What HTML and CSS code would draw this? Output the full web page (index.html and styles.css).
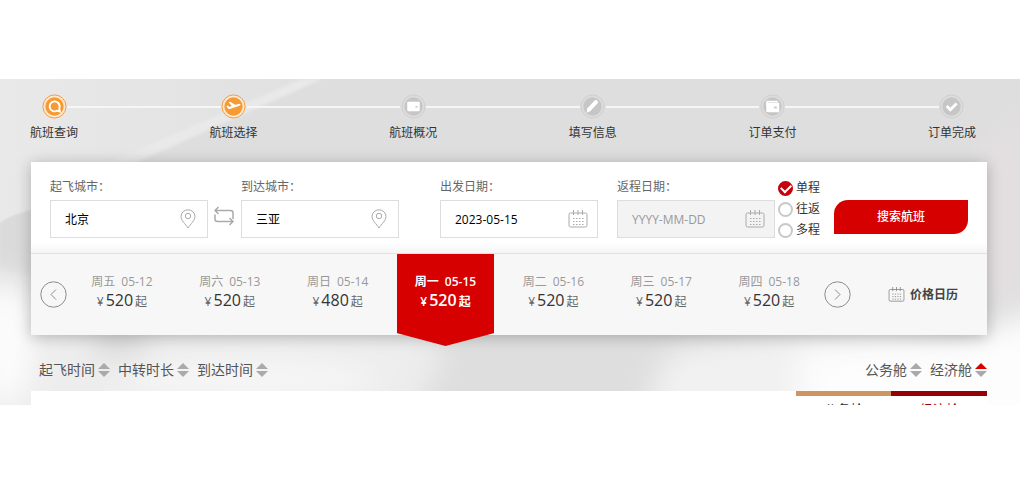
FILE: index.html
```html
<!DOCTYPE html>
<html lang="zh-CN">

<head>
    <meta charset="UTF-8">
    <title>航班选择</title>
    <link rel="stylesheet" href="styles.css">
</head>

<body>
    <!-- shared icons -->
    <svg class="symbols" aria-hidden="true">
        <symbol id="pin" viewBox="0 0 16 20">
            <path d="M8 19C5.500 15 1 11.500 1 7.500a7 6.700 0 0 1 14 0C15 11.500 10.500 15 8 19z" />
            <circle cx="8" cy="7" r="2.700" />
        </symbol>
        <symbol id="calendar" viewBox="0 0 20 18">
            <rect x="1" y="3" width="18" height="14" rx="1.500" />
            <path d="M5.500 0v5M10 0v5M14.500 0v5" />
            <path d="M5 8.500h11M5 11.500h11M5 14.500h11" stroke-dasharray="1.500 1.500" />
        </symbol>
    </svg>

    <main class="page">
        <svg class="sky" viewBox="0 0 1020 326" preserveAspectRatio="none" aria-hidden="true">
            <defs>
                <filter id="soft" x="-20%" y="-50%" width="140%" height="200%">
                    <feGaussianBlur stdDeviation="14" />
                </filter>
                <filter id="edge">
                    <feGaussianBlur stdDeviation="1.500" />
                </filter>
                <linearGradient id="light">
                    <stop offset="0" stop-color="#e9e9e9" />
                    <stop offset="1" stop-color="#e0e0e0" />
                </linearGradient>
            </defs>
            <path d="M0 0h320L125 84L31 131Q10 136 0 144z" fill="url(#light)" />
            <path d="M302 0h20L135 84h-28z" fill="#e9e9e9" filter="url(#edge)" />
            <path d="M0 144Q14 136 31 132v65L0 190z" fill="#dadada" filter="url(#edge)" />
            <g filter="url(#soft)">
                <path d="M-30 195Q10 185 60 230L390 240Q470 270 430 300L400 370H-30z" fill="#ededed" />
                <ellipse cx="5" cy="265" rx="28" ry="60" fill="#fcfcfc" />
                <ellipse cx="250" cy="300" rx="130" ry="20" fill="#f6f6f6" />
                <ellipse cx="120" cy="262" rx="30" ry="14" fill="#d6d6d6" />
                <path d="M1030 20v200H970V80z" fill="#e3dfe0" />
                <path d="M650 370Q640 270 700 265L870 240L960 258L1050 222V370z" fill="#f1f1f1" />
                <path d="M800 370V272L960 262L1060 235V370z" fill="#fdfdfd" />
            </g>
        </svg>

        <ol class="steps">
            <li class="step done">
                <svg class="step-icon" viewBox="0 0 26 26">
                    <circle class="ring" cx="13" cy="13" r="12" />
                    <circle class="disc" cx="13" cy="13" r="9.500" />
                    <path class="line" d="M16 17.200a5.200 5.200 0 1 1 2-2.500l.5 3.500-2.500-1" />
                </svg>
                航班查询
            </li>
            <li class="step-line" aria-hidden="true"></li>
            <li class="step done">
                <svg class="step-icon" viewBox="0 0 26 26">
                    <circle class="ring" cx="13" cy="13" r="12" />
                    <circle class="disc" cx="13" cy="13" r="9.500" />
                    <path class="shape" d="M5.500 12.500l1.200-.5 2 1.200 2.500-.7-3.200-4 1.600-.4 5 3.200 3.800-1q1.800-.2 1.900.6t-1.700 1.500L9 15.600q-1.300.2-1.900-.7z" />
                </svg>
                航班选择
            </li>
            <li class="step-line" aria-hidden="true"></li>
            <li class="step">
                <svg class="step-icon" viewBox="0 0 26 26">
                    <circle class="ring" cx="13" cy="13" r="12" />
                    <circle class="disc" cx="13" cy="13" r="9.500" />
                    <rect class="shape" x="6.500" y="8" width="13" height="10" rx="1" />
                    <path class="mark" d="M15 12.500h2.500v1.500H15z" />
                </svg>
                航班概况
            </li>
            <li class="step-line" aria-hidden="true"></li>
            <li class="step">
                <svg class="step-icon" viewBox="0 0 26 26">
                    <circle class="ring" cx="13" cy="13" r="12" />
                    <circle class="disc" cx="13" cy="13" r="9.500" />
                    <path class="shape" d="M7 19.500l.5-4.500 8-8.500q1.200-.8 2.500.4t.6 2.500l-8 8.600z" />
                </svg>
                填写信息
            </li>
            <li class="step-line" aria-hidden="true"></li>
            <li class="step">
                <svg class="step-icon" viewBox="0 0 26 26">
                    <circle class="ring" cx="13" cy="13" r="12" />
                    <circle class="disc" cx="13" cy="13" r="9.500" />
                    <rect class="shape" x="6.500" y="7" width="12" height="5" rx="1" />
                    <rect class="shape" x="6.500" y="9" width="13.500" height="10" rx="1" />
                    <path class="mark" d="M8 8.500h10v.6H8zM14.500 13h3v2h-3z" />
                </svg>
                订单支付
            </li>
            <li class="step-line" aria-hidden="true"></li>
            <li class="step">
                <svg class="step-icon" viewBox="0 0 26 26">
                    <circle class="ring" cx="13" cy="13" r="12" />
                    <circle class="disc" cx="13" cy="13" r="9.500" />
                    <path class="tick" d="M8 12.500l3.800 3.800 6.500-6.500" />
                </svg>
                订单完成
            </li>
        </ol>

        <section class="panel">
            <form class="search">
                <div class="field">
                    <label for="from">起飞城市：</label>
                    <div class="box">
                        <input id="from" type="text" value="北京">
                        <svg class="icon pin"><use href="#pin" /></svg>
                    </div>
                </div>
                <button class="swap" type="button" aria-label="交换城市">
                    <svg viewBox="0 0 20 20">
                        <path d="M4.500 1L1 4.500L4.500 8M1 4.500h15.500q2.500 0 2.500 2.500v6M15.500 12L19 15.500L15.500 19M19 15.500H3.500Q1 15.500 1 13V8.500" />
                    </svg>
                </button>
                <div class="field">
                    <label for="to">到达城市：</label>
                    <div class="box">
                        <input id="to" type="text" value="三亚">
                        <svg class="icon pin"><use href="#pin" /></svg>
                    </div>
                </div>
                <div class="field depart">
                    <label for="depart">出发日期：</label>
                    <div class="box">
                        <input id="depart" type="text" value="2023-05-15">
                        <svg class="icon calendar"><use href="#calendar" /></svg>
                    </div>
                </div>
                <div class="field return">
                    <label for="return">返程日期：</label>
                    <div class="box disabled">
                        <input id="return" type="text" placeholder="YYYY-MM-DD" disabled>
                        <svg class="icon calendar"><use href="#calendar" /></svg>
                    </div>
                </div>
                <div class="trip">
                    <label><input type="radio" name="trip" checked>单程</label>
                    <label><input type="radio" name="trip">往返</label>
                    <label><input type="radio" name="trip">多程</label>
                </div>
                <button class="submit" type="submit">搜索航班</button>
            </form>

            <div class="dates">
                <button class="arrow" type="button" aria-label="前一周">
                    <svg viewBox="0 0 27 27"><circle cx="13.500" cy="13.500" r="12.700" /><path d="M16 8.500l-5 5 5 5" /></svg>
                </button>
                <div class="days">
                    <button class="day" type="button"><span class="date"><span>周五</span><span>05-12</span></span><span class="price">¥<b>520</b>起</span></button>
                    <button class="day" type="button"><span class="date"><span>周六</span><span>05-13</span></span><span class="price">¥<b>520</b>起</span></button>
                    <button class="day" type="button"><span class="date"><span>周日</span><span>05-14</span></span><span class="price">¥<b>480</b>起</span></button>
                    <button class="day active" type="button"><span class="date"><span>周一</span><span>05-15</span></span><span class="price">¥<b>520</b>起</span></button>
                    <button class="day" type="button"><span class="date"><span>周二</span><span>05-16</span></span><span class="price">¥<b>520</b>起</span></button>
                    <button class="day" type="button"><span class="date"><span>周三</span><span>05-17</span></span><span class="price">¥<b>520</b>起</span></button>
                    <button class="day" type="button"><span class="date"><span>周四</span><span>05-18</span></span><span class="price">¥<b>520</b>起</span></button>
                </div>
                <button class="arrow" type="button" aria-label="后一周">
                    <svg viewBox="0 0 27 27"><circle cx="13.500" cy="13.500" r="12.700" /><path d="M11 8.500l5 5-5 5" /></svg>
                </button>
                <a class="price-calendar" href="#">
                    <svg class="icon" viewBox="0 0 20 18"><use href="#calendar" /></svg>
                    价格日历
                </a>
            </div>
        </section>

        <div class="sort">
            <button type="button">起飞时间<svg viewBox="0 0 12 14"><path d="M6 0l6 6H0z" /><path d="M0 8h12l-6 6z" /></svg></button>
            <button type="button">中转时长<svg viewBox="0 0 12 14"><path d="M6 0l6 6H0z" /><path d="M0 8h12l-6 6z" /></svg></button>
            <button type="button">到达时间<svg viewBox="0 0 12 14"><path d="M6 0l6 6H0z" /><path d="M0 8h12l-6 6z" /></svg></button>
            <button class="cabin" type="button">公务舱<svg viewBox="0 0 12 14"><path d="M6 0l6 6H0z" /><path d="M0 8h12l-6 6z" /></svg></button>
            <button type="button">经济舱<svg viewBox="0 0 12 14"><path class="on" d="M6 0l6 6H0z" /><path d="M0 8h12l-6 6z" /></svg></button>
        </div>

        <section class="results">
            <div class="tab business">公务舱</div>
            <div class="tab economy">经济舱</div>
        </section>
    </main>
</body>

</html>
```
FILE: styles.css
```css
* {
    box-sizing: border-box;
}

body {
    margin: 0;
    padding-top: 79px;
    background: #fff;
    color: #333;
    font: 12px/16px "Open Sans", "Noto Sans CJK SC", sans-serif;
}

button,
input {
    margin: 0;
    padding: 0;
    border: 0;
    background: none;
    color: inherit;
    font: inherit;
}

button {
    cursor: pointer;
}

.symbols {
    display: none;
}

.page {
    position: relative;
    isolation: isolate;
    overflow: hidden;
    padding: 15px 33px 0 31px;
    background: #dedede;
}

/* clouds behind the content */
.sky {
    position: absolute;
    z-index: -1;
    top: 0;
    left: 0;
    width: 100%;
    height: 100%;
}

/* Steps */
.steps {
    display: flex;
    margin: 0 12px 21px 0;
    padding: 0;
    list-style: none;
}

.step {
    display: flex;
    flex-direction: column;
    align-items: center;
    gap: 6px;
    width: 46px;
    white-space: nowrap;
}

.step-icon {
    width: 25px;
    height: 25px;
    fill: none;
}

.step-line {
    flex: 1;
    height: 2px;
    margin: 12px -10px 0;
    background: #f6f6f6;
}

.ring {
    fill: #dcdcdc;
    stroke: #cecece;
}

.disc {
    fill: #c6c6c6;
}

.done .ring {
    fill: #fbe9d2;
    stroke: #f59a35;
}

.done .disc {
    fill: #f59a35;
}

.mark {
    fill: #cecece;
}

.shape {
    fill: #fff;
}

.line {
    stroke: #fff;
    stroke-width: 2px;
}

.tick {
    stroke: #fff;
    stroke-width: 3px;
}

/* Search panel */
.panel {
    background: #fff;
    box-shadow: 0 2px 14px rgba(0, 0, 0, .25);
}

.search {
    display: flex;
    align-items: flex-end;
    height: 92px;
    padding: 0 19px 15px;
    border-bottom: 1px solid #e2e2e2;
    background: linear-gradient(#fff 80px, #f5f5f5);
}

.field {
    flex: 1;
    min-width: 0;
    color: #666;
}

.field label {
    display: block;
    margin-bottom: 5px;
}

.depart {
    margin-left: 41px;
}

.return {
    margin-left: 19px;
}

.box {
    display: flex;
    align-items: center;
    height: 38px;
    padding: 0 9px 0 14px;
    border: 1px solid #ddd;
    background: #fff;
}

.box input {
    flex: 1;
    min-width: 0;
    padding-top: 2px;
    color: #000;
}

.box.disabled {
    background: #f3f3f3;
}

.box input::placeholder {
    color: #999;
}

.icon {
    fill: none;
    stroke: #aaa;
}

.pin {
    width: 16px;
    height: 20px;
    margin-right: 2px;
}

.calendar {
    width: 20px;
    height: 18px;
}

.swap {
    width: 33px;
    height: 44px;
    padding-left: 6px;
    text-align: left;
}

.swap svg {
    display: block;
    width: 20px;
    height: 20px;
    fill: none;
    stroke: #aaa;
    stroke-width: 1.5px;
}

.trip {
    display: flex;
    flex-direction: column;
    gap: 5px;
    width: 59px;
    padding-left: 3px;
}

.trip label {
    display: flex;
    align-items: center;
    gap: 3px;
}

.trip input {
    appearance: none;
    width: 15px;
    height: 15px;
    border: 2px solid #c8c8c8;
    border-radius: 50%;
    background: #fff;
}

.trip input:checked {
    display: grid;
    place-items: center;
    border-color: #c7000b;
    background: #c7000b;
}

.trip input:checked::after {
    content: "";
    width: 8px;
    height: 5px;
    margin-bottom: 2px;
    border: solid #fff;
    border-width: 0 0 2px 2px;
    transform: rotate(-45deg);
}

.submit {
    width: 134px;
    height: 34px;
    margin-bottom: 4px;
    border-radius: 14px 0;
    background: #d70000;
    color: #fff;
    font-weight: 500;
}

/* Dates */
.dates {
    display: flex;
    align-items: center;
    height: 81px;
    padding: 0 29px 0 9px;
    background: #f7f7f7;
}

.arrow svg {
    display: block;
    width: 27px;
    height: 27px;
    fill: none;
    stroke: #8c8c8c;
}

.days {
    display: flex;
    flex: 1;
    align-self: stretch;
    margin: 0 1px;
}

.day {
    display: flex;
    flex: 1;
    flex-direction: column;
    align-items: center;
    margin: 0 5px;
    padding-top: 20px;
    color: #666;
}

.date {
    display: flex;
    gap: 6px;
    color: #999;
}

.price {
    display: flex;
    align-items: baseline;
    gap: 2px;
    line-height: 20px;
}

.price b {
    color: #333;
    font-size: 16px;
    font-weight: 400;
}

/* red flag, its tip hangs below the panel */
.active {
    margin-bottom: -11px;
    background: #d70000;
    clip-path: polygon(0 0, 100% 0, 100% 86%, 50% 100%, 0 86%);
    color: #fff;
    font-weight: 600;
}

.active .date,
.active b {
    color: #fff;
}

.active b {
    font-weight: 600;
}

.price-calendar {
    display: flex;
    align-items: center;
    gap: 5px;
    margin-left: 37px;
    color: #444;
    font-weight: 700;
    text-decoration: none;
    white-space: nowrap;
}

.price-calendar .icon {
    width: 17px;
    height: 15px;
    stroke: #888;
}

/* Sorting */
.sort {
    display: flex;
    gap: 8px;
    height: 56px;
    padding: 25px 0 0 8px;
    color: #555;
    font-size: 14px;
    line-height: 20px;
}

.sort button {
    display: flex;
    align-items: center;
    gap: 3px;
    height: 20px;
}

.sort svg {
    width: 12px;
    height: 14px;
    fill: #aaa;
}

.sort .on {
    fill: #d70000;
}

.cabin {
    margin-left: auto;
}

/* Results, only the top edge is open */
.results {
    display: flex;
    justify-content: flex-end;
    height: 14px;
    overflow: hidden;
    background: #fff;
}

.tab {
    width: 10%;
    padding-top: 3px;
    border-top: 5px solid #cd965e;
    font-size: 13px;
    line-height: 20px;
    text-align: center;
}

.economy {
    border-color: #960009;
    color: #960009;
}
```
